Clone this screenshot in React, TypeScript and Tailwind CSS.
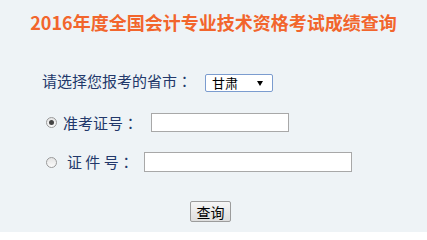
import React from "react";

const font = { fontFamily: '"Noto Sans CJK SC", "Microsoft YaHei", sans-serif' };

function Colon() {
  return <span className="[font-family:'Noto_Sans_CJK_JP',sans-serif]">：</span>;
}

function Radio({ checked }: { checked?: boolean }) {
  return (
    <span className="flex h-[11px] w-[11px] items-center justify-center rounded-full border border-[#9a9a9a] bg-gradient-to-b from-[#e4e4e4] to-[#fbfbfb]">
      {checked && <span className="h-[5px] w-[5px] rounded-full bg-[#444]" />}
    </span>
  );
}

export default function App() {
  return (
    <div
      className="h-[232px] w-[427px] overflow-hidden bg-[#eef3f6] text-[#22386a]"
      style={font}
    >
      <div className="pt-[10px] text-center text-[18px] font-bold leading-[24px] text-[#f2652c]">
        2016年度全国会计专业技术资格考试成绩查询
      </div>

      <div className="mt-[40px] flex h-[18px] items-center pl-[42px]">
        <span className="-mt-[4px] text-[15px] leading-[18px]">
          请选择您报考的省市<Colon />
        </span>
        <div className="ml-[13px] flex h-[18px] w-[68px] items-center justify-between rounded-[2px] border border-[#7b9ccf] bg-white pl-[6px] pr-[9px] text-[13px] leading-[16px] text-black">
          <span>甘肃</span>
          <svg width="6" height="5" viewBox="0 0 6 5">
            <path d="M0 0 H6 L3 5 Z" fill="#000" />
          </svg>
        </div>
      </div>

      <div className="mt-[21px] flex h-[19px] items-center pl-[46px]">
        <Radio checked />
        <span className="ml-[6px] text-[15px] leading-[18px]">
          准考证号<Colon />
        </span>
        <div className="ml-[13px] h-[19px] w-[138px] border border-[#a8a8a8] bg-white" />
      </div>

      <div className="mt-[20px] flex h-[20px] items-center pl-[46px]">
        <Radio />
        <span className="ml-[10px] whitespace-pre text-[15px] leading-[18px]">
          证 件 号<Colon />
        </span>
        <div className="ml-[10px] h-[20px] w-[208px] border border-[#a8a8a8] bg-white" />
      </div>

      <div className="mt-[29px] pl-[190px]">
        <button className="flex h-[21px] w-[41px] items-center justify-center rounded-[2px] border border-[#9c9c9c] bg-gradient-to-b from-[#f6f6f6] to-[#dedede] text-[14px] leading-[16px] text-black">
          查询
        </button>
      </div>
    </div>
  );
}
